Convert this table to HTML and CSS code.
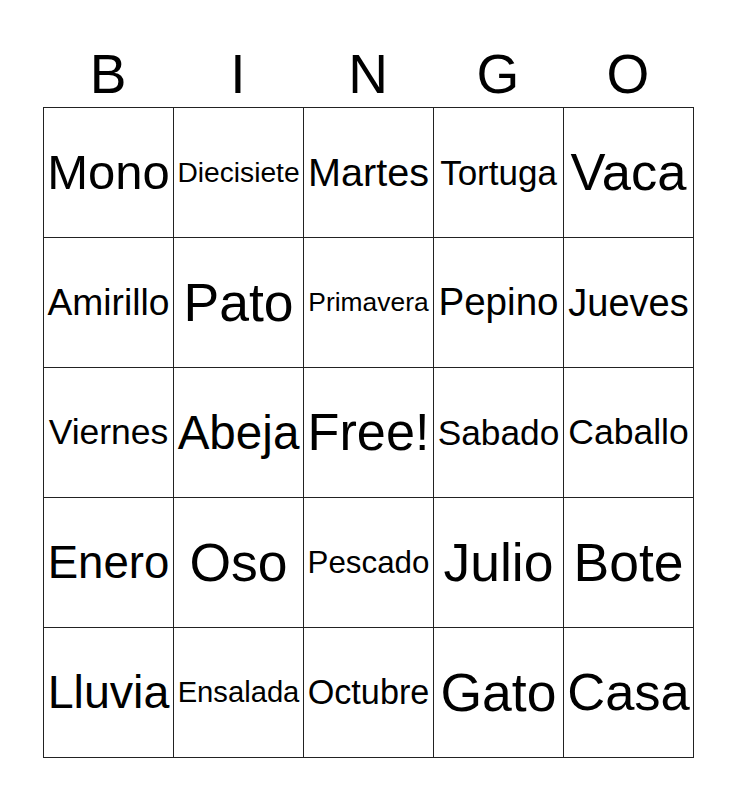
FILE: index.html
```html
<!DOCTYPE html>
<html>
<head>
<meta charset="utf-8">
<link rel="stylesheet" href="styles.css">
</head>
<body>
<div class="card">
  <div class="head">
    <span>B</span><span>I</span><span>N</span><span>G</span><span>O</span>
  </div>
  <div class="grid">
    <div class="cell" style="font-size:49px">Mono</div>
    <div class="cell" style="font-size:28.2px">Diecisiete</div>
    <div class="cell" style="font-size:39.6px">Martes</div>
    <div class="cell" style="font-size:35px">Tortuga</div>
    <div class="cell" style="font-size:52.5px">Vaca</div>

    <div class="cell" style="font-size:37.2px">Amirillo</div>
    <div class="cell" style="font-size:53.5px">Pato</div>
    <div class="cell" style="font-size:26.4px">Primavera</div>
    <div class="cell" style="font-size:38.6px">Pepino</div>
    <div class="cell" style="font-size:38px">Jueves</div>

    <div class="cell" style="font-size:35.5px">Viernes</div>
    <div class="cell" style="font-size:47.6px">Abeja</div>
    <div class="cell" style="font-size:52.2px">Free!</div>
    <div class="cell" style="font-size:35.3px">Sabado</div>
    <div class="cell" style="font-size:35.5px">Caballo</div>

    <div class="cell" style="font-size:45.6px">Enero</div>
    <div class="cell" style="font-size:53.5px">Oso</div>
    <div class="cell" style="font-size:31.3px">Pescado</div>
    <div class="cell" style="font-size:53.5px">Julio</div>
    <div class="cell" style="font-size:53.5px">Bote</div>

    <div class="cell" style="font-size:46.6px">Lluvia</div>
    <div class="cell" style="font-size:29.2px">Ensalada</div>
    <div class="cell" style="font-size:34.2px">Octubre</div>
    <div class="cell" style="font-size:53.5px">Gato</div>
    <div class="cell" style="font-size:52.5px">Casa</div>
  </div>
</div>
</body>
</html>
```
FILE: styles.css
```css
html, body {
  margin: 0;
  padding: 0;
  background: #fff;
}
body {
  font-family: "Liberation Sans", Arial, sans-serif;
  color: #000;
}
.card {
  width: 651px;
  margin-left: 43px;
}
.head {
  box-sizing: border-box;
  height: 107px;
  padding-top: 47px;
  display: grid;
  grid-template-columns: repeat(5, 130px);
  font-size: 55px;
  line-height: 1;
}
.head span {
  text-align: center;
}
.grid {
  display: grid;
  grid-template-columns: repeat(5, 130px);
  grid-auto-rows: 130px;
  border-left: 1px solid #222;
  border-top: 1px solid #222;
}
.cell {
  border-right: 1px solid #222;
  border-bottom: 1px solid #222;
  display: flex;
  align-items: center;
  justify-content: center;
  white-space: nowrap;
  line-height: 1;
  overflow: hidden;
}
```
